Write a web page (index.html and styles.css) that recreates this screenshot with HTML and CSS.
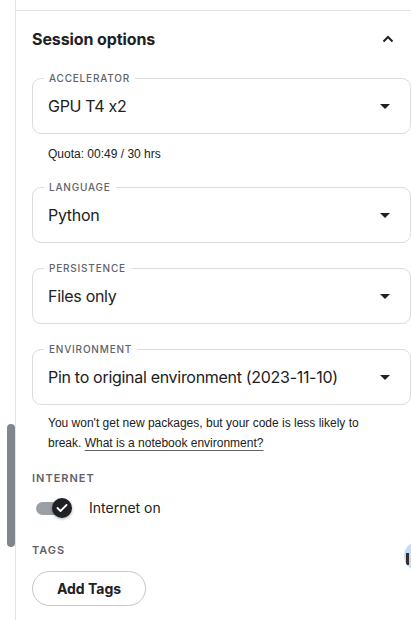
FILE: index.html
```html
<!DOCTYPE html>
<html>
<head>
<meta charset="utf-8">
<link rel="stylesheet" href="styles.css">
</head>
<body>
<div class="page">
  <div class="panel">
    <div class="prev-section"></div>
    <section class="session">
      <div class="session-header">
        <h2 class="session-title">Session options</h2>
        <svg class="chevron" width="12" height="8" viewBox="0 0 12 8"><path d="M1.5 6.5 L6 2 L10.5 6.5" fill="none" stroke="#202124" stroke-width="2"/></svg>
      </div>

      <div class="field field-first">
        <span class="field-label">ACCELERATOR</span>
        <span class="field-value">GPU T4 x2</span>
        <span class="caret"></span>
      </div>
      <p class="quota">Quota: 00:49 / 30 hrs</p>

      <div class="field field-lang">
        <span class="field-label">LANGUAGE</span>
        <span class="field-value">Python</span>
        <span class="caret"></span>
      </div>

      <div class="field field-next">
        <span class="field-label">PERSISTENCE</span>
        <span class="field-value">Files only</span>
        <span class="caret"></span>
      </div>

      <div class="field field-next">
        <span class="field-label">ENVIRONMENT</span>
        <span class="field-value">Pin to original environment (2023-11-10)</span>
        <span class="caret"></span>
      </div>
      <p class="helper">You won't get new packages, but your code is less likely to break. <a class="helper-link" href="#">What is a notebook environment?</a></p>

      <div class="section-label label-internet">INTERNET</div>
      <div class="toggle-row">
        <span class="toggle">
          <span class="toggle-track"></span>
          <span class="toggle-knob">
            <svg width="12" height="10" viewBox="0 0 12 10"><path d="M1.5 5 L4.5 8 L10.5 2" fill="none" stroke="#fff" stroke-width="1.8" stroke-linecap="round" stroke-linejoin="round"/></svg>
          </span>
        </span>
        <span class="toggle-text">Internet on</span>
      </div>

      <div class="section-label label-tags">TAGS</div>
      <button class="btn-tags">Add Tags</button>
    </section>
  </div>
  <div class="scrollbar"></div>
  <div class="avatar"><span class="avatar-inner"></span></div>
</div>
</body>
</html>
```

FILE: styles.css
```css
* { box-sizing: border-box; }
html, body {
  margin: 0;
  padding: 0;
  width: 411px;
  height: 620px;
  overflow: hidden;
  background: #fff;
  font-family: Inter, "Noto Sans", "Liberation Sans", sans-serif;
  font-feature-settings: "calt" 0;
  color: #202124;
}
.page {
  position: relative;
  width: 411px;
  height: 620px;
  display: flex;
}
.panel {
  margin-left: 15px;
  border-left: 1px solid #e3e3e3;
  flex: 1;
  display: flex;
  flex-direction: column;
}
.prev-section {
  height: 11px;
  border-bottom: 1px solid #e3e3e3;
}
.session {
  padding: 16px 0 0 16px;
  display: flex;
  flex-direction: column;
  align-items: flex-start;
}
.session-header {
  width: 100%;
  height: 24px;
  display: flex;
  align-items: center;
  justify-content: space-between;
  padding-right: 17px;
}
.session-title {
  margin: 0;
  font-size: 16px;
  line-height: 24px;
  font-weight: 700;
  letter-spacing: -0.1px;
}
.chevron { display: block; }

.field {
  position: relative;
  width: 379px;
  height: 56px;
  border: 1px solid #dadce0;
  border-radius: 9px;
  display: flex;
  align-items: center;
  justify-content: space-between;
  padding: 0 20px 0 15px;
}
.field-first { margin-top: 27px; }
.field-lang { margin-top: 25px; }
.field-next { margin-top: 25px; }
.field-label {
  position: absolute;
  top: -7px;
  left: 11px;
  padding: 0 5px;
  background: #fff;
  font-size: 10px;
  line-height: 12px;
  font-weight: 500;
  letter-spacing: 0.8px;
  color: #5f6368;
}
.field-value {
  font-size: 16px;
  line-height: 24px;
  letter-spacing: -0.3px;
  color: #202124;
}
.caret {
  width: 0;
  height: 0;
  border-left: 5px solid transparent;
  border-right: 5px solid transparent;
  border-top: 5px solid #202124;
}
.quota {
  margin: 12px 0 0 16px;
  font-family: "Liberation Sans", Arial, sans-serif;
  font-size: 12px;
  line-height: 16px;
}
.helper {
  margin: 8px 0 0 16px;
  width: 345px;
  font-family: "Liberation Sans", Arial, sans-serif;
  font-size: 12px;
  line-height: 20px;
}
.helper-link {
  color: #202124;
  text-decoration: underline;
  text-decoration-color: #5f6368;
  text-underline-offset: 3px;
}
.section-label {
  font-size: 11px;
  line-height: 16px;
  font-weight: 600;
  letter-spacing: 1px;
  color: #5f6368;
}
.label-internet { margin-top: 17px; }
.label-tags { margin-top: 22px; }
.toggle-row {
  margin-top: 10px;
  height: 24px;
  display: flex;
  align-items: center;
}
.toggle {
  position: relative;
  width: 41px;
  height: 24px;
  margin-left: 4px;
  display: flex;
  align-items: center;
}
.toggle-track {
  width: 28px;
  height: 13px;
  border-radius: 7px;
  background: #9aa0a6;
}
.toggle-knob {
  position: absolute;
  left: 16px;
  top: 2px;
  width: 20px;
  height: 20px;
  border-radius: 50%;
  background: #202124;
  box-shadow: 0 1px 3px rgba(0,0,0,0.35);
  display: flex;
  align-items: center;
  justify-content: center;
}
.toggle-knob svg { display: block; }
.toggle-text {
  margin-left: 12px;
  font-size: 14px;
  line-height: 20px;
}
.btn-tags {
  margin-top: 13px;
  width: 114px;
  height: 35px;
  border: 1px solid #c4c7c5;
  border-radius: 18px;
  background: #fff;
  font-family: Inter, "Noto Sans", "Liberation Sans", sans-serif;
  font-size: 14px;
  font-weight: 700;
  color: #202124;
  padding: 0;
}
.scrollbar {
  position: absolute;
  left: 7px;
  top: 424px;
  width: 8px;
  height: 123px;
  border-radius: 4px;
  background: #80868b;
}
.avatar {
  position: absolute;
  left: 404px;
  top: 541px;
  width: 30px;
  height: 30px;
  border-radius: 50%;
  background: #c5dcf7;
  overflow: hidden;
}
.avatar-inner {
  position: absolute;
  left: 2px;
  top: 12px;
  width: 3px;
  height: 12px;
  background: #3a2e2a;
}
```
